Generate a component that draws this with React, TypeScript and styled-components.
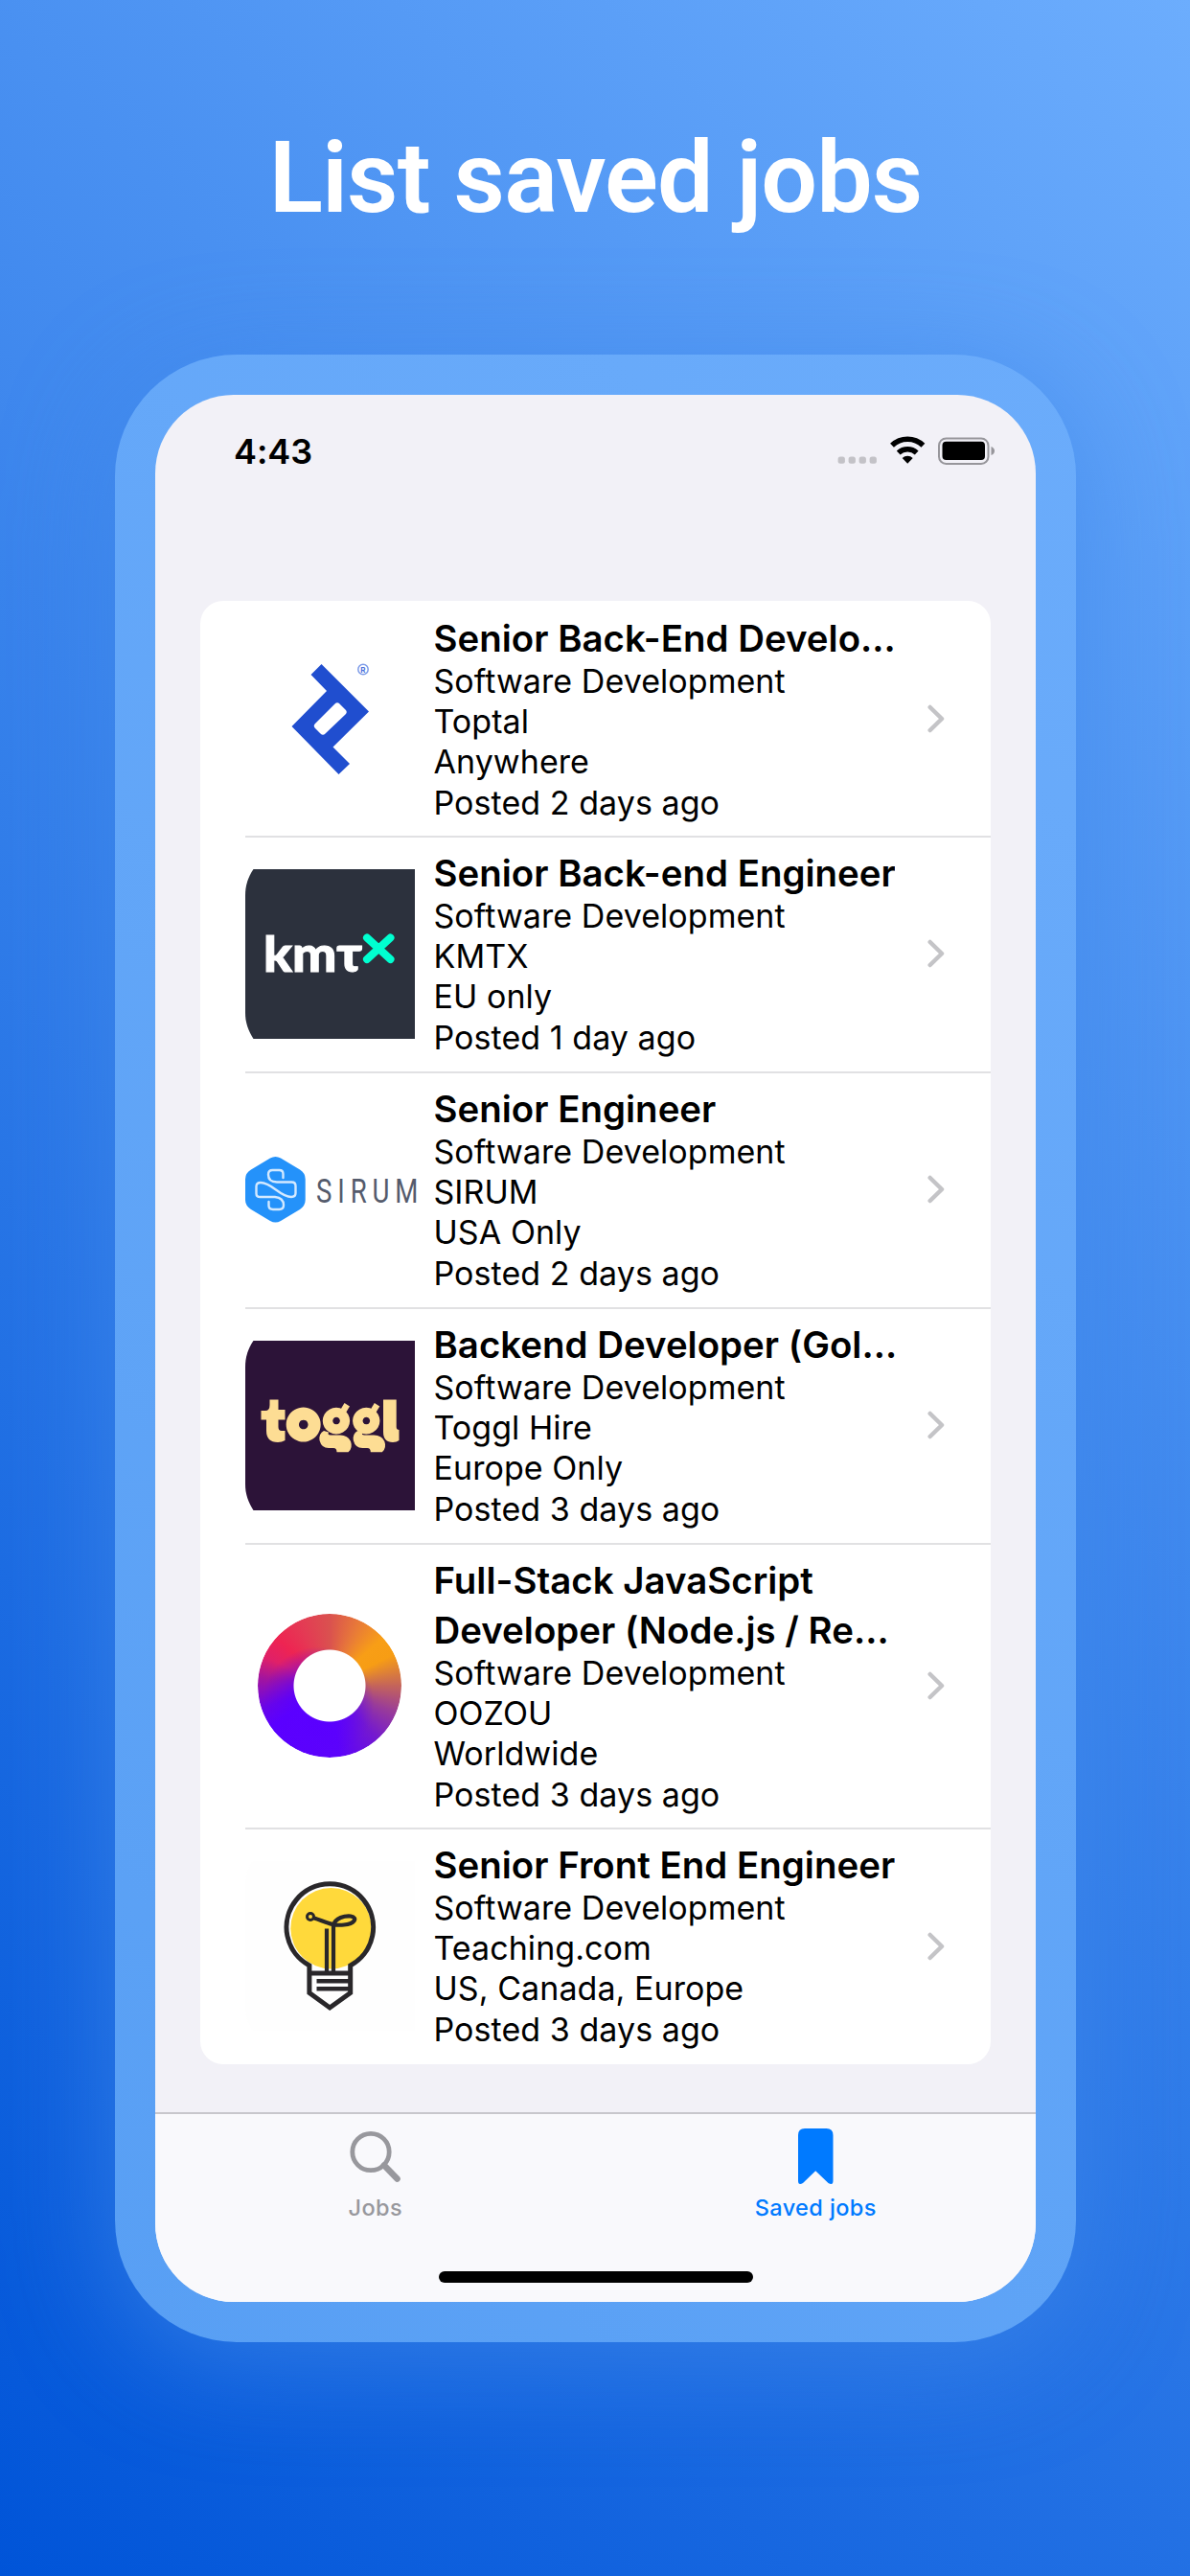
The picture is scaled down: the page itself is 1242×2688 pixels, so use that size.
import React, { ReactNode } from "react";
import styled, { createGlobalStyle } from "styled-components";

const Global = createGlobalStyle`
  * { box-sizing: border-box; }
  body { margin: 0; font-family: Inter, "Liberation Sans", sans-serif; color: #000; }
`;

const Poster = styled.main`
  width: 1242px;
  height: 2688px;
  padding-left: 1px;
  overflow: hidden;
  display: flex;
  flex-direction: column;
  align-items: center;
  background: linear-gradient(45deg, #0054d8 0%, #6cadfd 100%);
`;

const Headline = styled.h1`
  margin: 0;
  height: 370px;
  padding-top: 125px;
  font: 600 104px/122px Roboto, sans-serif;
  letter-spacing: -0.9px;
  color: #fff;
  white-space: nowrap;
`;

const Phone = styled.section`
  flex: none;
  width: 1003px;
  height: 2074px;
  padding: 42px;
  border-radius: 127px;
  background: linear-gradient(45deg, #589ff4, #6bacfb);
  box-shadow: 0 20px 110px rgba(64, 136, 234, 0.65);
`;

const Screen = styled.div`
  height: 1990px;
  display: flex;
  flex-direction: column;
  overflow: hidden;
  border-radius: 82px;
  background: #f2f1f7;
`;

const StatusBar = styled.header`
  flex: none;
  height: 215px;
  padding: 38px 41px 0 82px;
  display: flex;
  align-items: flex-start;
  justify-content: space-between;
`;

const Clock = styled.span`
  font-size: 36px;
  line-height: 42px;
  font-weight: 600;
  letter-spacing: -0.1px;
`;

const StatusIcons = styled.div`
  display: flex;
  padding-top: 4px;
`;

const JobList = styled.ul`
  flex: none;
  width: 825px;
  margin: 0 47px;
  padding: 0;
  list-style: none;
  border-radius: 24px;
  overflow: hidden;
  background: #fff;
`;

const JobRow = styled.li<{ $height: number }>`
  height: ${(p) => p.$height}px;
  margin-left: 47px;
  padding-right: 46px;
  display: flex;
  align-items: center;
  & + & { box-shadow: inset 0 2px 0 #e1e1e3; }
`;

const Logo = styled.div`
  flex: none;
  width: 177px;
  height: 177px;
  margin-right: 19.5px;
  svg { display: block; overflow: visible; }
`;

const Details = styled.div`
  width: 481px;
  height: 100%;
  padding-top: 12.5px;
  white-space: nowrap;
`;

const Title = styled.h2`
  margin: 0;
  overflow: hidden;
  font-size: 38.4px;
  line-height: 52px;
  font-weight: 600;
  letter-spacing: 0.03px;
`;

const Lines = styled.div`
  margin-top: -2px;
`;

const Line = styled.p`
  margin: 0;
  font-size: 34px;
  line-height: 42.4px;
  letter-spacing: 0.06px;
`;

const Chevron = styled.svg`
  margin-left: auto;
`;

const TabBar = styled.nav`
  flex: 1;
  margin-top: 50px;
  border-top: 2px solid #c8c7cc;
  background: #f9f9fc;
  display: flex;
  flex-wrap: wrap;
  align-content: flex-start;
  justify-content: center;
`;

const Tab = styled.div<{ $active?: boolean }>`
  width: 50%;
  height: 164px;
  padding-top: 12px;
  display: flex;
  flex-direction: column;
  align-items: center;
  font-size: 23.5px;
  line-height: 28px;
  font-weight: 500;
  letter-spacing: 0.4px;
  color: ${(p) => (p.$active ? "#007aff" : "#98989d")};
  svg { margin-bottom: 8px; }
`;

const HomeBar = styled.div`
  width: 328px;
  height: 12px;
  border-radius: 6px;
  background: #000;
`;

const ToptalLogo = () => (
  <svg width="177" height="177" viewBox="0 0 177 177">
    <path fill="#204ecf" fillRule="evenodd" d="M79.500 32 129 81.500 91.500 118.500 109 136 97.500 147 48.500 97 85 60 68.500 43ZM93.500 73.500 73 94a3.500 3.500 0 0 0 0 5l5.500 5.500a3.500 3.500 0 0 0 5 0L104.500 84.500a3.500 3.500 0 0 0 0-5L98.500 73.500a3.500 3.500 0 0 0-5 0Z" />
    <circle cx="123" cy="37.500" r="5.200" fill="none" stroke="#7d9be8" strokeWidth="1.500" />
    <text x="123" y="40.500" textAnchor="middle" fontSize="8" fontWeight="700" fill="#4d73dc">R</text>
  </svg>
);

const ClippedTile = ({ fill, children }: { fill: string; children: ReactNode }) => (
  <svg width="177" height="177" viewBox="0 0 177 177">
    <path fill={fill} d="M8.500 0H177V177H8.500C3 168 0 160 0 150V27C0 17 3 8 8.500 0Z" />
    {children}
  </svg>
);

const KmtxLogo = () => (
  <ClippedTile fill="#2c313d">
    <text x="19" y="106.500" fontFamily="Lato" fontWeight="900" fontSize="51" fill="#fff" stroke="#fff" strokeWidth="1" textLength="103" lengthAdjust="spacingAndGlyphs">kmτ</text>
    <path d="M127 71.500 151.500 94M151.500 71.500 127 94" stroke="#00ffd0" strokeWidth="8" strokeLinecap="round" />
  </ClippedTile>
);

const SirumLogo = () => (
  <svg width="177" height="177" viewBox="0 0 177 177">
    <path fill="#2492fa" d="M26 55.500Q31.500 52.500 37 55.500L57 67.500Q62.700 71 62.700 77.500V99Q62.700 105 57 109L37 121Q31.500 124 26 121L6 109Q0 105 0 99V77.500Q0 71 6 67.500Z" />
    <path fill="none" stroke="#d3e9ff" strokeWidth="2.400" strokeLinecap="round" d="M39.500 76V72Q39.500 68 35.500 68H28.500Q24 68 24 72.500Q24 80.500 33 80.500H48.500Q52.500 80.500 52.500 84.500V92Q52.500 96 48 96C36 96 28 81 16 81Q11.500 81 11.500 85V92.500Q11.500 96 15.500 96H31Q40 97 40 104.500Q40 109 35.500 109H29Q24.500 109 24.500 105V101" />
    <text transform="translate(74 101.500) scale(0.8 1)" fontFamily="Roboto" fontWeight="400" fontSize="34.500" fill="#555b6c" textLength="133" lengthAdjust="spacing">SIRUM</text>
  </svg>
);

const TogglLogo = () => (
  <ClippedTile fill="#2c1338">
    <g fill="#fddd94">
      <path d="M25.500 61.500H34.500V72H41.500V82.500H34.500V90Q34.500 94 38 94H41.500V104Q38 106 34 106Q22 106 22 94V82.500H16.500V73H21Q25.500 73 25.500 67Z" />
      <path fillRule="evenodd" d="M60.700 69.500A18 18 0 1 1 60.600 69.500ZM60.700 82.700A4.800 4.800 0 1 0 60.800 82.700Z" />
      {[0, 31.3].map((x) => (
        <g key={x} transform={`translate(${x} 0)`}>
          <path fillRule="evenodd" d="M95 69.800A14.200 13.800 0 1 1 94.900 69.800ZM95 79.700A3.800 3.800 0 1 0 95.100 79.700Z" />
          <path d="M99 72.500 103.500 65 109 68.500 105 75Z" />
        </g>
      ))}
      {[0, 35.3].map((x) => (
        <path key={x} transform={`translate(${x} 0)`} d="M82 94Q76.500 97 77.500 104Q79.500 112 87 112H92Q95.500 112 95.500 116.300H107.500Q112.500 112 110 105Q107 98.500 99 98.500H89Q85.500 98.500 87 95.500Z" />
      ))}
      <path d="M144 61.500H157.700V90Q157.700 93 160.500 93V104Q158 106 154 106Q144 106 144 95Z" />
    </g>
  </ClippedTile>
);

const Ring = styled.div`
  width: 150px;
  height: 150px;
  margin: 14px 13px 13px;
  border-radius: 50%;
  background:
    radial-gradient(circle at 42% 62%, rgba(90, 0, 255, 0.7) 20%, rgba(90, 0, 255, 0) 46%),
    conic-gradient(
      #da514f 0deg, #e87a38 25deg, #f89e16 48deg, #f79d14 64deg, #c4645a 90deg,
      #9a3c98 112deg, #7419cf 138deg, #5c02fb 172deg, #5a00ff 235deg, #6a05e6 252deg,
      #a2149f 276deg, #e02068 294deg, #ee2452 312deg, #e43a54 335deg, #da514f 360deg
    );
  mask: radial-gradient(circle, transparent 37px, #000 38px);
`;

const BulbLogo = () => (
  <svg width="177" height="177" viewBox="0 0 177 177">
    <path fill="#fefefe" d="M8 0H177V177H8Q0 166 0 150V27Q0 10 8 0Z" />
    <circle cx="89.500" cy="70.200" r="42.200" fill="#ffd93b" />
    <g fill="none" stroke="#29272a" strokeWidth="5">
      <path d="M110 117H66.900V109A45.300 45.300 0 1 1 109.700 109V137.500L88.200 153 66.900 137.500V115" />
      <path strokeWidth="4.500" d="M74.500 125.200H110M74.500 133.300H110" />
      <path strokeWidth="4.200" d="M85 116V70.500M92 116V67C94 59 104 57 110 57.500C118 59 114 65.500 103 66.500C91 68 83 63 72 59.500" />
      <circle cx="68" cy="58" r="3.500" strokeWidth="3" />
    </g>
  </svg>
);

type Job = {
  logo: ReactNode;
  title: string[];
  lines: string[];
  height: number;
};

const jobs: Job[] = [
  { logo: <ToptalLogo />, title: ["Senior Back-End Develo…"], lines: ["Toptal", "Anywhere", "Posted 2 days ago"], height: 245 },
  { logo: <KmtxLogo />, title: ["Senior Back-end Engineer"], lines: ["KMTX", "EU only", "Posted 1 day ago"], height: 246 },
  { logo: <SirumLogo />, title: ["Senior Engineer"], lines: ["SIRUM", "USA Only", "Posted 2 days ago"], height: 246 },
  { logo: <TogglLogo />, title: ["Backend Developer (Gol…"], lines: ["Toggl Hire", "Europe Only", "Posted 3 days ago"], height: 246 },
  { logo: <Ring />, title: ["Full-Stack JavaScript", "Developer (Node.js / Re…"], lines: ["OOZOU", "Worldwide", "Posted 3 days ago"], height: 297 },
  { logo: <BulbLogo />, title: ["Senior Front End Engineer"], lines: ["Teaching.com", "US, Canada, Europe", "Posted 3 days ago"], height: 247 },
];

export default function App() {
  return (
    <Poster>
      <Global />
      <Headline>List saved jobs</Headline>
      <Phone>
        <Screen>
          <StatusBar>
            <Clock>4:43</Clock>
            <StatusIcons>
              <svg width="166" height="36" viewBox="0 0 166 36">
                <g fill="#c3c2c7">
                  {[0, 11, 22, 33].map((x) => (
                    <rect key={x} x={x + 0.6} y="22.500" width="7.300" height="7.300" rx="2.500" />
                  ))}
                </g>
                <path d="M73.200 29.800 67.700 24A8 8 0 0 1 78.700 24Z" />
                <path d="M63.700 18.500A14 14 0 0 1 82.700 18.500M57 10.700A23.500 23.500 0 0 1 89.400 10.700" fill="none" stroke="#000" strokeWidth="5.600" />
                <rect x="106" y="3.400" width="51.500" height="26.600" rx="7.500" fill="none" stroke="#97969b" strokeWidth="2" />
                <rect x="109.500" y="6.700" width="44.500" height="19.300" rx="4" />
                <path d="M160.500 12Q164 13.500 164 16.500T160.500 21Z" fill="#97969b" />
              </svg>
            </StatusIcons>
          </StatusBar>
          <JobList>
            {jobs.map((job) => (
              <JobRow key={job.lines[0]} $height={job.height}>
                <Logo>{job.logo}</Logo>
                <Details>
                  {job.title.map((t) => (
                    <Title key={t}>{t}</Title>
                  ))}
                  <Lines>
                    <Line>Software Development</Line>
                    {job.lines.map((l) => (
                      <Line key={l}>{l}</Line>
                    ))}
                  </Lines>
                </Details>
                <Chevron width="20" height="32" viewBox="0 0 20 32" fill="none" stroke="#c4c4c7" strokeWidth="4.500" strokeLinecap="round" strokeLinejoin="round">
                  <path d="M2.700 4 15 16 2.700 28" />
                </Chevron>
              </JobRow>
            ))}
          </JobList>
          <TabBar>
            <Tab>
              <svg width="60" height="64" viewBox="0 0 60 64" fill="none" stroke="#98989d">
                <circle cx="25" cy="27.500" r="19.200" strokeWidth="4.800" />
                <path d="M39 41.500 52.500 55.500" strokeWidth="6.600" strokeLinecap="round" />
              </svg>
              Jobs
            </Tab>
            <Tab $active>
              <svg width="60" height="64" viewBox="0 0 60 64" fill="#007aff">
                <path d="M12 10Q12 3 19 3H41.500Q48.500 3 48.500 10V57.500Q48.500 63 43.500 60L30.200 47.300 17 60Q12 63 12 57.500Z" />
              </svg>
              Saved jobs
            </Tab>
            <HomeBar />
          </TabBar>
        </Screen>
      </Phone>
    </Poster>
  );
}
